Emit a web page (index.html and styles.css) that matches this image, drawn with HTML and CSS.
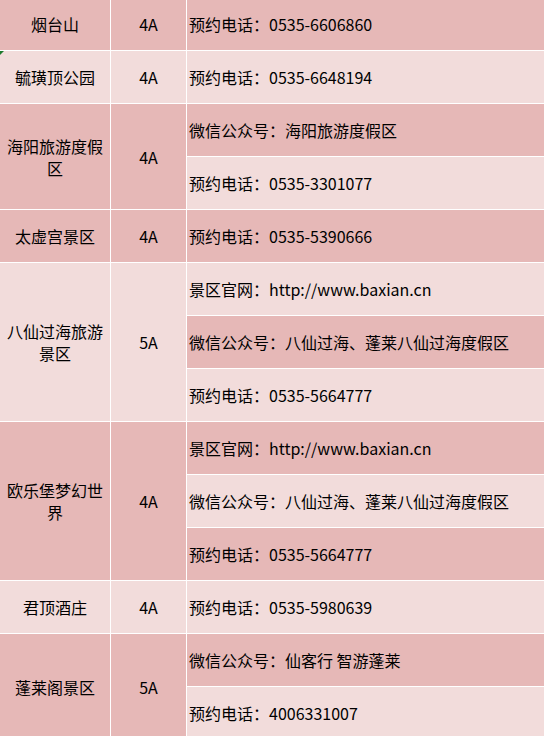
FILE: index.html
```html
<!DOCTYPE html>
<html lang="zh-CN">
<head>
<meta charset="utf-8">
<title>景区信息</title>
<link rel="stylesheet" href="styles.css">
</head>
<body>
<div class="sheet">
  <div class="c name d">烟台山</div>
  <div class="c level d">4A</div>
  <div class="c info d">预约电话：0535-6606860</div>

  <div class="c name l flagged">毓璜顶公园<span class="tri"></span></div>
  <div class="c level l">4A</div>
  <div class="c info l">预约电话：0535-6648194</div>

  <div class="c name d span2">海阳旅游度假区</div>
  <div class="c level d span2">4A</div>
  <div class="c info d">微信公众号：海阳旅游度假区</div>
  <div class="c info l">预约电话：0535-3301077</div>

  <div class="c name d">太虚宫景区</div>
  <div class="c level d">4A</div>
  <div class="c info d">预约电话：0535-5390666</div>

  <div class="c name l span3">八仙过海旅游景区</div>
  <div class="c level l span3">5A</div>
  <div class="c info l">景区官网：http://www.baxian.cn</div>
  <div class="c info d">微信公众号：八仙过海、蓬莱八仙过海度假区</div>
  <div class="c info l">预约电话：0535-5664777</div>

  <div class="c name d span3">欧乐堡梦幻世界</div>
  <div class="c level d span3">4A</div>
  <div class="c info d">景区官网：http://www.baxian.cn</div>
  <div class="c info l">微信公众号：八仙过海、蓬莱八仙过海度假区</div>
  <div class="c info d">预约电话：0535-5664777</div>

  <div class="c name l">君顶酒庄</div>
  <div class="c level l">4A</div>
  <div class="c info l">预约电话：0535-5980639</div>

  <div class="c name d span2">蓬莱阁景区</div>
  <div class="c level d span2">5A</div>
  <div class="c info d">微信公众号：仙客行 智游蓬莱</div>
  <div class="c info l">预约电话：4006331007</div>
</div>
</body>
</html>
```
FILE: styles.css
```css
html, body {
  margin: 0;
  padding: 0;
  background: #ffffff;
}
body {
  width: 544px;
  height: 736px;
  overflow: hidden;
  font-family: "Noto Sans CJK SC", "Noto Sans", sans-serif;
  font-size: 16px;
  color: #000000;
}
.sheet {
  display: grid;
  grid-template-columns: 110px 75px 1fr;
  grid-auto-rows: 52px;
  gap: 1px;
  background: #ffffff;
  margin-top: -2px;
}
.c {
  display: flex;
  align-items: center;
  line-height: 22px;
}
.d { background: #e6b8b7; }
.l { background: #f2dcdb; }
.name, .level {
  grid-column: auto;
  justify-content: center;
  text-align: center;
  padding: 0 2px;
}
.info {
  grid-column: 3;
  padding: 0 2px;
  white-space: nowrap;
}
.span2 { grid-row: span 2; }
.span3 { grid-row: span 3; }
.flagged { position: relative; }
.tri {
  position: absolute;
  left: 0;
  top: 0;
  width: 0;
  height: 0;
  border-top: 4px solid #1e7a2e;
  border-right: 4px solid transparent;
}
```
